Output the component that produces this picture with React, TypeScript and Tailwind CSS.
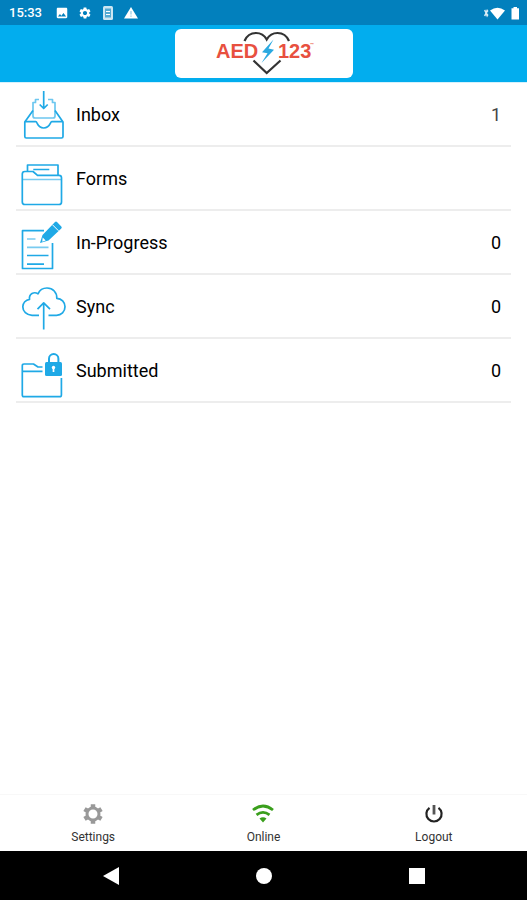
import type { ReactNode } from "react";
import { MdImage, MdSettings } from "react-icons/md";

function RowIcon({ children }: { children: ReactNode }) {
    return (
        <svg viewBox="0 0 48 60" className="w-12 h-[60px] shrink-0" fill="none" stroke="#1fa9e6" strokeWidth="1.7" strokeLinejoin="round" aria-hidden="true">
            {children}
        </svg>
    )
}

const rows = [
    {
        label: "Inbox",
        count: "1",
        icon: (
            <RowIcon>
                <path d="M23.7 7V24M19.7 20.5l4 4 4-4" />
                <path d="M19 15.5h-3.5v3H13V32q0 2 2 2h18q2 0 2-2V18.5h-2.5v-3H28" strokeOpacity="0.65" />
                <path d="M13 26.5L4.8 38v14.5q0 1.5 1.5 1.5h35.2q1.5 0 1.5-1.5V38L35 26.5" />
                <path d="M4.8 37.7h11c1.8 0 1.2 6.3 7.9 6.3s6.3-6.3 8.1-6.3h11" />
            </RowIcon>
        ),
    },
    {
        label: "Forms",
        count: "",
        icon: (
            <RowIcon>
                <path d="M7.5 23v-6H38v10M13.3 21.5h16" />
                <path d="M2.3 26q0-2.5 2.5-2.5h8.2l4.5 3.8H39q2.5 0 2.5 2.5V54q0 2.500-2.500 2.500H4.800q-2.500 0-2.500-2.500Z" />
                <path d="M2.3 31.5h39.2" strokeOpacity="0.6" />
            </RowIcon>
        ),
    },
    {
        label: "In-Progress",
        count: "0",
        icon: (
            <RowIcon>
                <path d="M24 18.7H2.500V56.500H32.500V31" />
                <path d="M7 27h8.500M7 35.300h21.500" strokeOpacity="0.6" />
                <path d="M7 43.500h21.500M7 52.200h17" />
                <path d="M20 31l2.500-8L35 10q1-1 2 0l4.300 4.500q1 1 0 2L28.500 28.500Z" fill="#1fa9e6" stroke="none" />
                <path d="M32.500 12.800l6 6" stroke="white" strokeWidth="1" />
                <path d="M22.700 25.500l3 3-3.500 1.200Z" fill="white" stroke="none" />
            </RowIcon>
        ),
    },
    {
        label: "Sync",
        count: "0",
        icon: (
            <RowIcon>
                <path d="M19 39.300h-7C6.500 39 2.800 35.500 2.800 30.800c0-4 3-7 6.700-7.500-.7-5.500 4.500-8 8.500-5.500 1.500-3.500 5-5.800 9-5.800 6 0 10 4.500 9.800 10.300 4.700.2 8.200 3.700 8.200 8.500 0 5-3.700 8.500-8.500 8.500h-8" />
                <path d="M23.700 53.500V27M17.500 33.200l6.200-6.400 6.300 6.400" />
            </RowIcon>
        ),
    },
    {
        label: "Submitted",
        count: "0",
        icon: (
            <RowIcon>
                <path d="M22.500 27h-4.500l-4.500-3H4q-1.700 0-1.700 1.700V55q0 1.700 1.700 1.700h35.700q1.700 0 1.700-1.700V38M2.300 31.300h20.200" />
                <path d="M29 22.500v-3.700a4.700 4.700 0 0 1 9.400 0v3.700" strokeWidth="2" />
                <rect x="25" y="22" width="17" height="14" rx="1.500" fill="#1fa9e6" stroke="none" />
                <circle cx="33.500" cy="27.500" r="1.700" fill="white" stroke="none" />
                <path d="M33.500 28v4" stroke="white" />
            </RowIcon>
        ),
    },
]

function Logo() {
    return (
        <svg viewBox="0 0 178 49" className="w-[178px] h-[49px]" role="img" aria-label="AED 123">
            <g fill="none" stroke="#333333" strokeWidth="2.200">
                <path d="M69.500 12C72 6 77 4 81 4c5 0 8.500 2.500 10.700 6.500C94 6.500 97.500 4 102.500 4c4 0 9 2 11.500 8" />
                <path d="M78.500 31.500L91.700 44 105.500 31.500" />
            </g>
            <path d="M98.500 10.500L87 23.200l5.500 1L86.500 34 99 20.700l-5.500-1.200Z" fill="#2aa9e0" />
            <g fill="#e8503f" fontFamily="Liberation Sans, Arial, sans-serif" fontWeight="700">
                <text x="41" y="28.500" fontSize="20">AED</text>
                <text x="103" y="28.500" fontSize="20">123</text>
                <text x="135" y="17" fontSize="4">™</text>
            </g>
        </svg>
    )
}

function StatusBar() {
    return (
        <div className="h-[25px] bg-[#0280bd] text-white flex items-center justify-between pl-[9px] pr-[7px]">
            <div className="flex items-center gap-[9px]">
                <span className="text-[13px] leading-4 font-medium mr-1">15:33</span>
                <MdImage size={14} />
                <MdSettings size={14} />
                <svg viewBox="0 0 14 14" className="size-3.5" aria-hidden="true">
                    <rect x="2" y="0" width="10" height="14" rx="1.500" fill="white" fillOpacity="0.800" />
                    <path d="M4 2.500h6v9H4Z" fill="#0280bd" fillOpacity="0.600" />
                    <path d="M5 5h4v1H5Zm0 3h4v1H5Z" fill="white" />
                </svg>
                <svg viewBox="0 0 14 14" className="size-3.5" aria-hidden="true">
                    <path d="M7 1l7 11.500H0Z" fill="white" />
                    <path d="M7 5v3.500M7 9.500v1.300" stroke="#0280bd" strokeOpacity="0.500" />
                </svg>
            </div>
            <svg viewBox="0 0 36 14" className="w-9 h-3.5" fill="white" aria-hidden="true">
                <path d="M0 4.500l1.200-1L2 5l1-2 1.500 2L3 7l1.500 2L3 11.500 2 9l-.8 1.500-1.200-1L1.300 7Z" fillOpacity="0.850" />
                <path d="M6 4.500Q13.500-1 21 4.500L13.500 13.500Z" />
                <path d="M27.500 2.200h2V1h3.500v1.200h2V13.500h-7.500Z" />
            </svg>
        </div>
    )
}

export default function App() {
    return (
        <div className="min-h-screen flex flex-col bg-white text-black font-[Roboto,sans-serif]">
            <StatusBar />
            <header className="bg-[#02adee] h-[57px] flex justify-center items-start pt-1">
                <div className="bg-white rounded-md">
                    <Logo />
                </div>
            </header>

            <main className="flex-1 border-t border-[#d5f1fc]">
                <ul className="mx-4">
                    {rows.map((row) => (
                        <li key={row.label} className="border-b-2 border-[#ededed]">
                            <a href="#" className="flex items-center h-[62px] pl-1 pr-2.5 gap-2 text-lg leading-6">
                                {row.icon}
                                <span className="flex-1 pt-0.5">{row.label}</span>
                                <span className={row.count === "1" ? "pt-0.5 text-[#444444]" : "pt-0.5"}>{row.count}</span>
                            </a>
                        </li>
                    ))}
                </ul>
            </main>

            <footer className="border-t border-[#f8f8f8] h-[57px] px-2 flex text-xs leading-4 text-[#333333]">
                <button className="flex-1 flex flex-col items-center pt-2 gap-1">
                    <svg viewBox="0 0 22 22" className="size-[22px]" fill="none" stroke="#999999" aria-hidden="true">
                        <circle cx="11" cy="11" r="6" strokeWidth="3" />
                        <path d="M11 1.200V5M11 17v3.800M2.500 6.100l3.300 1.900M16.200 14l3.300 1.900M2.500 15.900L5.800 14M16.200 8l3.300-1.900" strokeWidth="4.500" />
                    </svg>
                    <span>Settings</span>
                </button>
                <button className="flex-1 flex flex-col items-center pt-2 gap-1">
                    <svg viewBox="0 0 22 22" className="size-[22px]" fill="none" stroke="#3a9f1c" strokeWidth="2.800" aria-hidden="true">
                        <path d="M1 7Q11-1 21 7M4.500 11.800Q11 7 17.500 11.800" />
                        <path d="M7.500 15.500Q11 12.800 14.500 15.500L11 19.500Z" fill="#3a9f1c" stroke="none" />
                    </svg>
                    <span>Online</span>
                </button>
                <button className="flex-1 flex flex-col items-center pt-2 gap-1">
                    <svg viewBox="0 0 22 22" className="size-[22px]" fill="none" stroke="#222222" strokeWidth="2.200" aria-hidden="true">
                        <path d="M6.500 4.800A7.600 7.600 0 1 0 15.500 4.800" />
                        <path d="M11 2v9.500" stroke="#555555" strokeWidth="2.800" />
                    </svg>
                    <span>Logout</span>
                </button>
            </footer>

            <nav className="bg-black h-[49px] px-[34px] flex items-center">
                <button aria-label="Back" className="flex-1 flex justify-center">
                    <svg viewBox="0 0 16 18" className="w-4 h-[18px]" fill="white">
                        <path d="M16 0v18L0 9Z" />
                    </svg>
                </button>
                <button aria-label="Home" className="flex-1 flex justify-center">
                    <span className="size-4 rounded-full bg-white" />
                </button>
                <button aria-label="Recent apps" className="flex-1 flex justify-center">
                    <span className="size-4 bg-white" />
                </button>
            </nav>
        </div>
    )
}
